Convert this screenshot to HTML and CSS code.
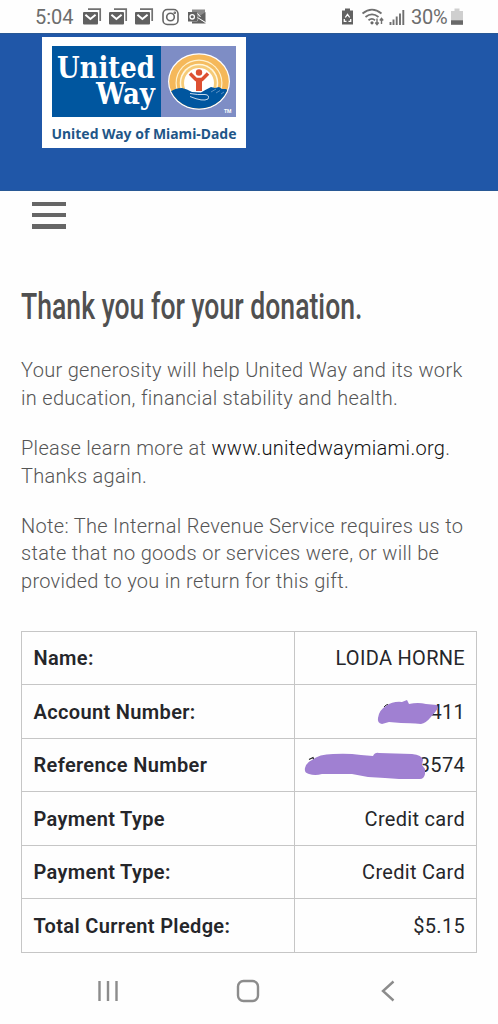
FILE: index.html
```html
<!DOCTYPE html>
<html lang="en">
<head>
<meta charset="utf-8">
<title>United Way of Miami-Dade</title>
<link rel="stylesheet" href="styles.css">
</head>
<body>
<div class="status">
  <span class="clock">5:04</span>
  <svg class="notices" width="126" height="20" viewBox="0 0 126 20">
    <defs>
      <g id="mail">
        <path d="M5 1.200h12.200V13" fill="none" stroke="#717171" stroke-width="1.700"/>
        <rect x="0" y="4" width="15" height="12.500" rx="1" fill="#606060"/>
        <path d="M2.400 6.800l5 4.200 5.200-4.200" fill="none" stroke="#fff" stroke-width="2"/>
      </g>
    </defs>
    <use href="#mail" x="1"/><use href="#mail" x="27"/><use href="#mail" x="53"/>
    <g fill="none" stroke="#666" stroke-width="1.600">
      <rect x="81" y="1.500" width="15" height="15" rx="4.300"/>
      <circle cx="88.500" cy="9" r="3.800"/>
      <circle cx="92.800" cy="4.800" r=".5"/>
    </g>
    <path d="M110 1.500h13v5l-5 3v3h-8z" fill="#8a8a8a"/>
    <path d="M106 4h9v9.500h-9z" fill="#626262"/>
    <circle cx="110.200" cy="8.800" r="2.200" fill="none" stroke="#fff" stroke-width="1.300"/>
    <path d="M110 13.500h5l2-3 6.500 4.500v.5H110z" fill="#626262"/>
    <path d="M115.500 9.500l8-5.500v10.500z" fill="#626262"/>
    <path d="M115.500 5.500l3 3.500M115.500 9.500l8 5" stroke="#fff" stroke-width="1"/>
  </svg>
  <svg class="radios" width="66" height="20" viewBox="0 0 66 20">
    <path d="M4 .5h5v2h3V16.500H1V2.500h3z" fill="#626262"/>
    <path d="M4.300 9.500l2.200-3.200 2.200 3.200M3.300 11v2.300h2.200M9.700 11v2.300H7.500" fill="none" stroke="#fff" stroke-width="1.300"/>
    <g fill="none" stroke="#707070" stroke-width="1.800">
      <path d="M21.500 5.500Q31-2.200 40.500 5.500M24.500 9Q31 3.700 37.500 9M27.500 12.300Q31 9.500 34 12.300"/>
    </g>
    <circle cx="31" cy="14.800" r="1.600" fill="#666"/>
    <path d="M36 10.500v6M34.300 14.500L36 16.700l1.700-2.200M40.500 16v-5.500M38.800 12.500l1.700-2.200 1.700 2.200" fill="none" stroke="#707070" stroke-width="1.400"/>
    <path d="M49.500 17v-3M52.500 17v-5.500M55.700 17V8.500M59 17V5.500M62.300 17V2" stroke="#707070" stroke-width="1.900"/>
  </svg>
  <span class="percent">30%</span>
  <svg class="battery" width="12" height="18" viewBox="0 0 12 18">
    <path d="M3.500 .5h5v2.500H12V13H0V3h3.500z" fill="#cfcfcf"/>
    <path d="M0 12.300h12V16.800H0z" fill="#686868"/>
  </svg>
</div>

<header class="banner">
  <svg class="logo" width="204" height="111" viewBox="0 0 204 111">
    <rect width="204" height="111" fill="#fff"/>
    <rect x="10" y="9" width="109" height="71" fill="#00569f"/>
    <rect x="119" y="9" width="75" height="71" fill="#7e8dc5"/>
    <g class="wordmark">
      <text x="15" y="40.500" textLength="98" lengthAdjust="spacingAndGlyphs">United</text>
      <text x="54" y="67" textLength="59" lengthAdjust="spacingAndGlyphs">Way</text>
    </g>
    <clipPath id="disc"><ellipse cx="157" cy="44.500" rx="29.800" ry="27"/></clipPath>
    <ellipse cx="157" cy="44.500" rx="31" ry="28.300" fill="#fff"/>
    <g clip-path="url(#disc)">
      <rect x="126" y="15" width="62" height="58" fill="#f5b85a"/>
      <circle cx="157" cy="46" r="23.500" fill="#fff2cf"/>
      <circle cx="157" cy="46" r="22.300" fill="#f5bd61"/>
      <circle cx="157" cy="46" r="19.300" fill="#fff6dc"/>
      <circle cx="157" cy="46" r="17.800" fill="#f6cb78"/>
      <circle cx="157" cy="46" r="15" fill="#fff"/>
    </g>
    <circle cx="157" cy="35.500" r="3.200" fill="#dd4f32"/>
    <path d="M148 36.500l6 6h6L166 36.500" fill="none" stroke="#dd4f32" stroke-width="3.500"/>
    <path d="M154 41h6v13h-6z" fill="#dd4f32"/>
    <g clip-path="url(#disc)">
      <path d="M126 56Q133 51 140 51Q145 52 150 55L159 55.500Q163 53 169 50L173 51 177 50 180 52 184 52 188 55V74H126z" fill="#00569f"/>
      <path d="M169 55l5-3M174 56l4-2.500M179 57l3-2" stroke="#83a9d2" stroke-width=".7"/>
      <path d="M148 56.500Q156 58 163 57.500Q168 58 166 62Q161 65 148 59.500" fill="none" stroke="#c5d9ec" stroke-width="1"/>
    </g>
    <text class="tm" x="182" y="76">TM</text>
    <text class="chapter" x="9.500" y="101.800" textLength="185" lengthAdjust="spacingAndGlyphs">United Way of Miami-Dade</text>
  </svg>
</header>

<div class="menu"><i></i><i></i><i></i></div>

<main>
  <h1><span>Thank you for your donation.</span></h1>
  <p>Your generosity will help United Way and its work<br>in education, financial stability and health.</p>
  <p>Please learn more at <a>www.unitedwaymiami.org</a>.<br>Thanks again.</p>
  <p>Note: The Internal Revenue Service requires us to<br>state that no goods or services were, or will be<br>provided to you in return for this gift.</p>
  <table>
    <tr><th>Name:</th><td>LOIDA HORNE</td></tr>
    <tr><th>Account Number:</th><td>411
      <svg class="scribble" width="182" height="52" viewBox="0 0 182 52"><path d="M90 21Q92 18.500 94 18.500" stroke="#222" stroke-width="1" fill="none"/><path d="M84 32Q85 24 92 20Q99 15 108 16L113 14 115 18Q124 16 132 18L143 19Q145 21 142 25L136 32Q132 37 127 38Q115 37 107 37L95 36 88 38Q83 37 84 32z"/></svg></td></tr>
    <tr><th>Reference Number</th><td>3574
      <svg class="scribble" width="182" height="52" viewBox="0 0 182 52"><path d="M15 19.500l4-2 1 3" stroke="#222" stroke-width="1.200" fill="none"/><path d="M11 28Q12 23 18 20Q25 14 39 14Q54 13 67 15L79 16Q81 12 85 13L118 14Q128 15 129 20L128 25 131 29V34Q130 39 126 39L105 39 91 38 74 37 58 34 43 34 28 34Q21 36 15 34Q10 33 11 28z"/></svg></td></tr>
    <tr><th>Payment Type</th><td>Credit card</td></tr>
    <tr><th>Payment Type:</th><td>Credit Card</td></tr>
    <tr><th>Total Current Pledge:</th><td>$5.15</td></tr>
  </table>
</main>

<nav>
  <svg width="24" height="24" viewBox="0 0 24 24"><path d="M3.500 2v20M12 2v20M20.500 2v20"/></svg>
  <svg width="24" height="24" viewBox="0 0 24 24"><rect x="2" y="2" width="20" height="20" rx="5.500"/></svg>
  <svg width="24" height="24" viewBox="0 0 24 24"><path d="M17.500 2.500L7 12l10.500 9.500"/></svg>
</nav>
</body>
</html>
```
FILE: styles.css
```css
* { box-sizing: border-box; }
body {
  margin: 0;
  width: 498px;
  height: 1024px;
  overflow: hidden;
  background: #fefefe;
  font-family: Roboto, "Liberation Sans", sans-serif;
}
svg { display: block; }
.status {
  display: flex;
  height: 33px;
  padding-left: 35px;
  color: #6d6d6d;
  font-size: 20px;
  line-height: 34px;
}
.clock { width: 47px; }
.notices { margin-top: 8px; }
.radios { margin: 8px 0 0 133px; }
.percent { margin-left: 4px; width: 40px; letter-spacing: -.3px; white-space: nowrap; }
.battery { margin-top: 8px; }
.banner {
  height: 158px;
  padding: 5px 0 0 42px;
  background: #2057a8;
  border-top: 1px solid #285895;
  border-bottom: 1px solid #285895;
}
.logo { margin-top: -2px; }
.wordmark {
  fill: #fff;
  font: bold 30px "DejaVu Serif", serif;
}
.tm { fill: #fff; font: bold 5px Roboto, sans-serif; }
.chapter { fill: #1f5688; font: bold 14.5px "Noto Sans", sans-serif; }
.menu {
  display: grid;
  gap: 7px;
  width: 34px;
  margin: 11px 0 0 31.5px;
}
.menu i { height: 4.2px; background: #666; }
main { padding: 54px 21px 0; }
h1 {
  margin: 0 0 26.7px;
  height: 48px;
  color: #505050;
  font-size: 36.5px;
  font-weight: 500;
  line-height: 48px;
  white-space: nowrap;
}
h1 span { display: inline-block; transform: scaleX(.729); transform-origin: left; }
p {
  margin: 0 0 22.3px;
  color: #555;
  font-size: 20px;
  font-weight: 300;
  line-height: 27.7px;
  letter-spacing: .3px;
  white-space: nowrap;
}
p a { color: #111; }
table {
  width: 456px;
  margin-top: 34.8px;
  table-layout: fixed;
  border-collapse: collapse;
  color: #25262a;
  font-size: 20px;
  line-height: 28px;
}
tr { height: 53.5px; }
th, td { border: 1px solid #c6c6c6; padding: 1px 11px 0 11.5px; }
th { width: 273px; text-align: left; font-weight: 600; letter-spacing: .35px; }
td { position: relative; text-align: right; letter-spacing: .3px; }
.scribble { position: absolute; left: -1px; top: 1px; fill: #a080d2; }
nav {
  display: flex;
  justify-content: space-between;
  width: 304px;
  margin: 26px 0 0 96px;
}
nav svg { fill: none; stroke: #8c8c8c; stroke-width: 2.4; }
```
